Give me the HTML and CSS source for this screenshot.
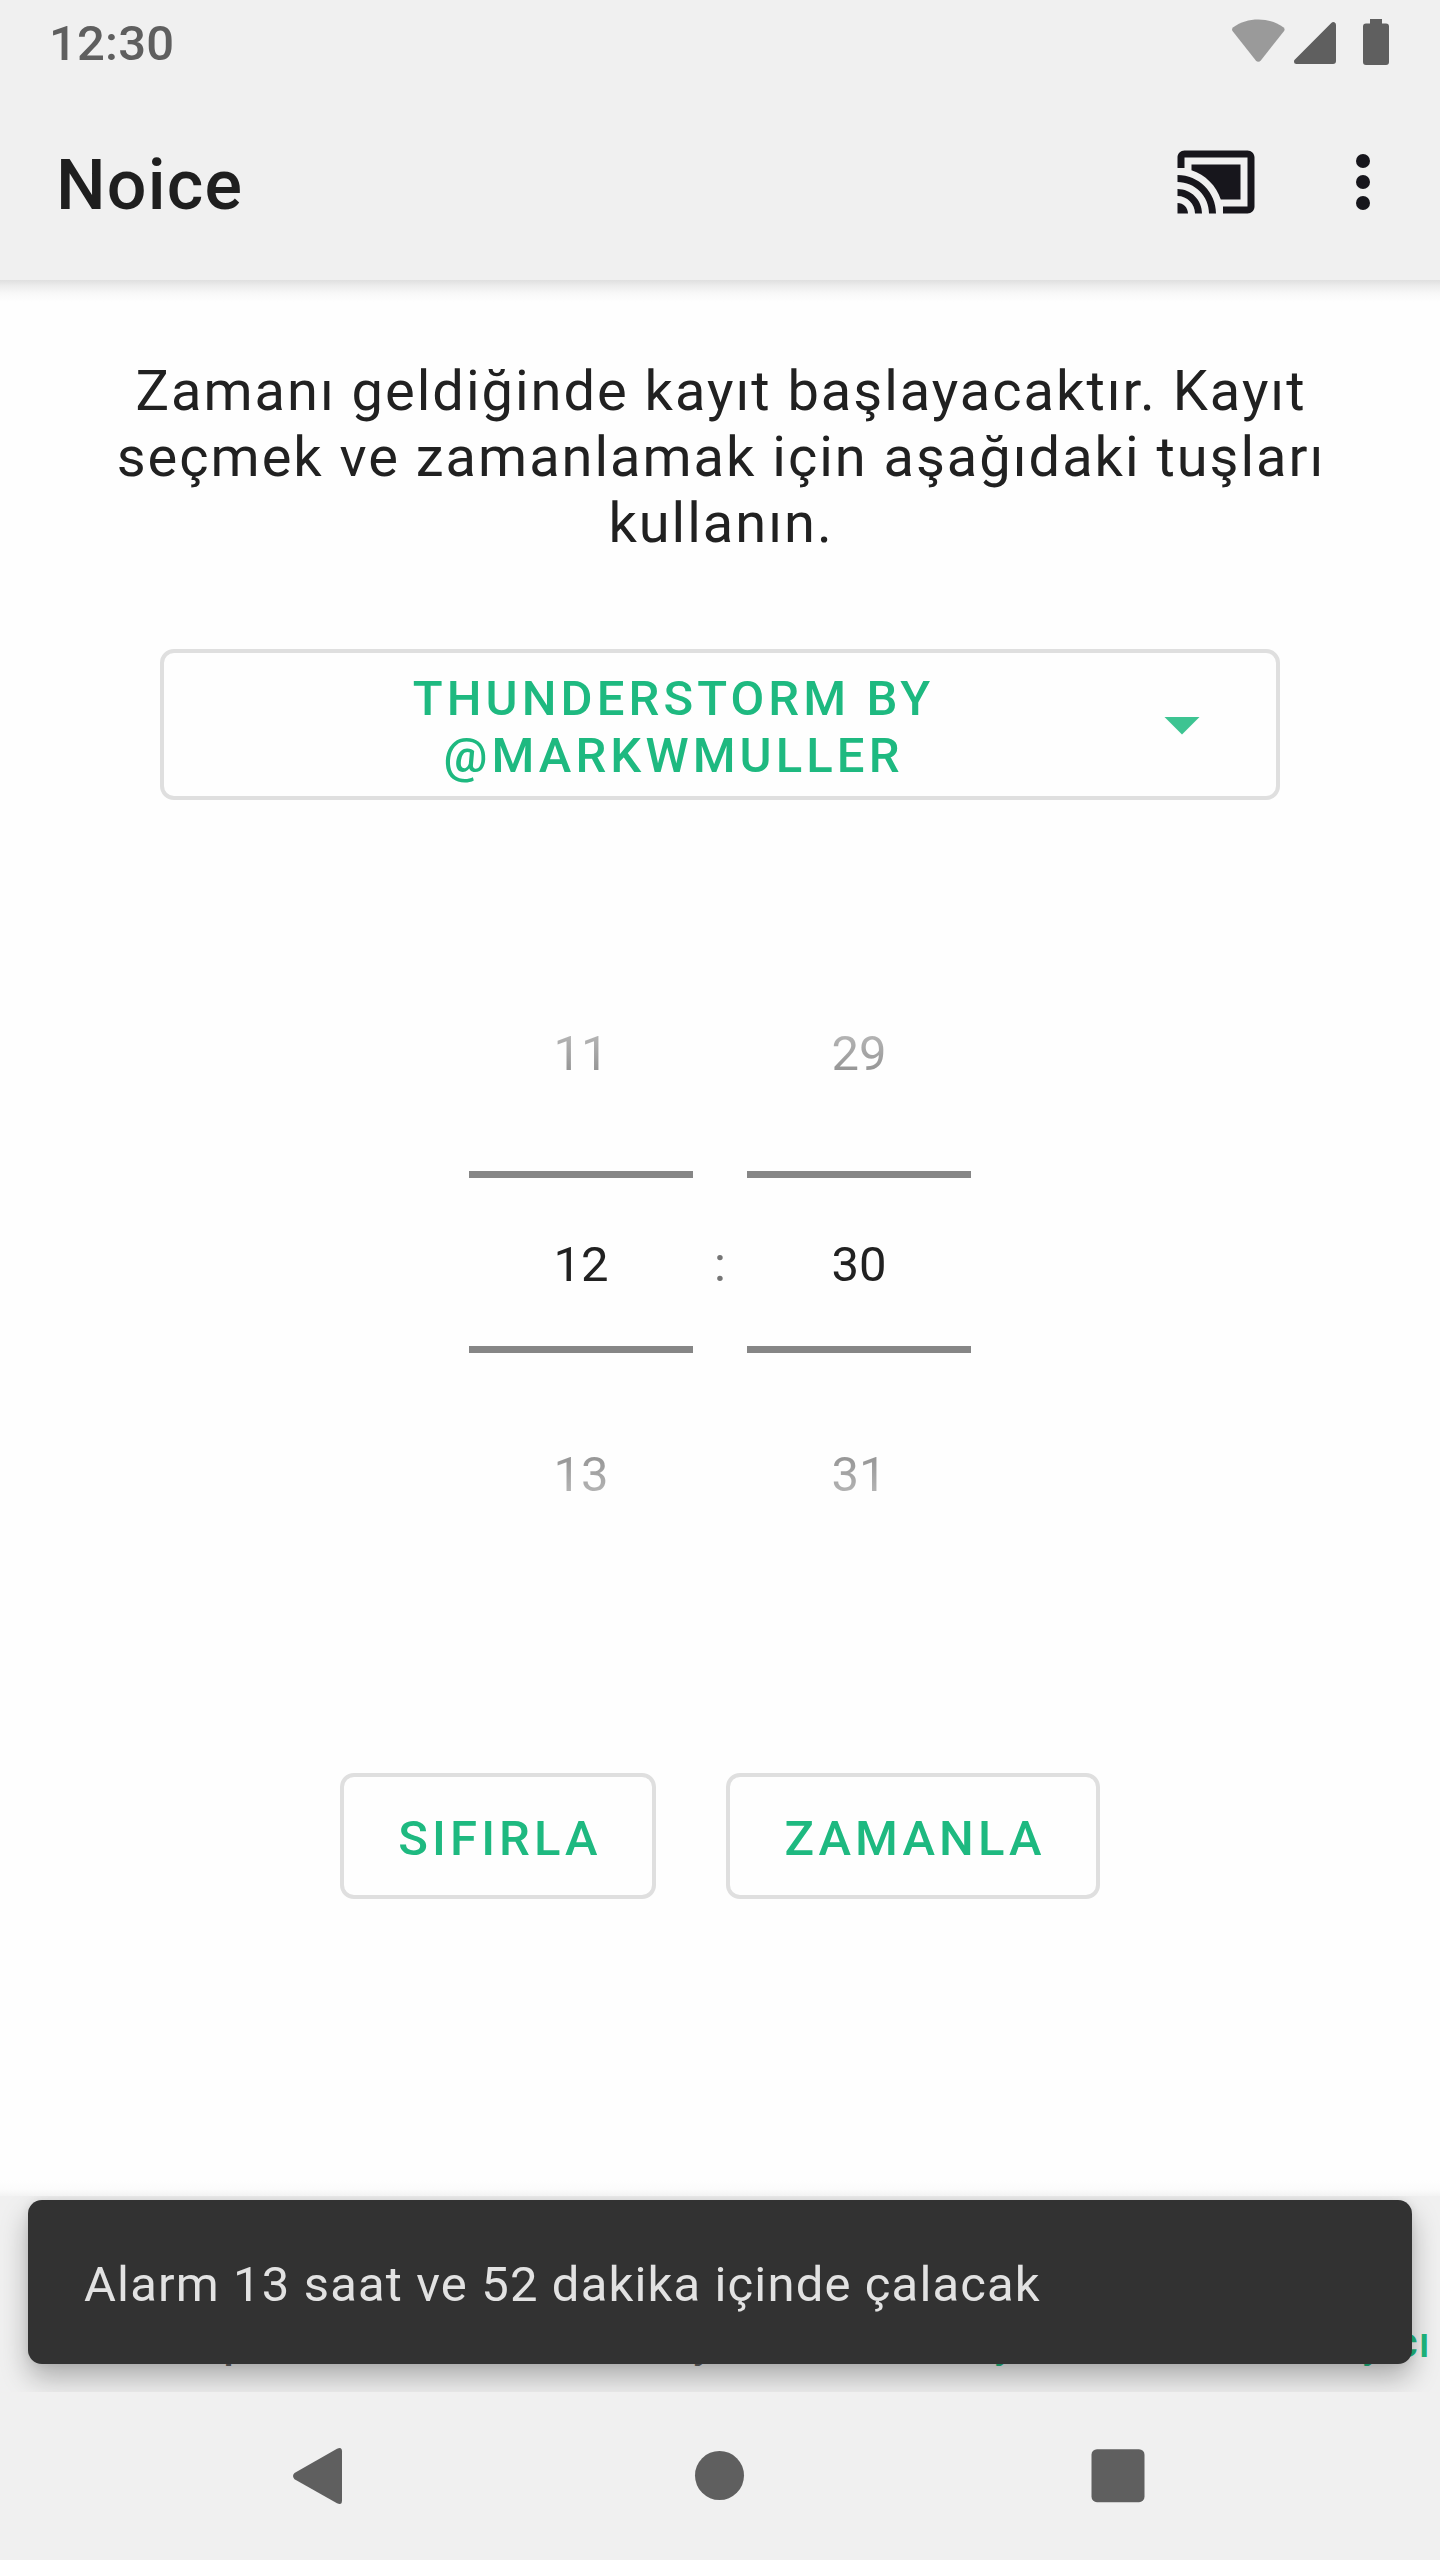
FILE: index.html
```html
<!DOCTYPE html>
<html lang="tr">
<head>
<meta charset="utf-8">
<title>Noice</title>
<link rel="stylesheet" href="styles.css">
</head>
<body>
<div class="screen">
  <header class="top">
    <div class="status-bar">
      <span class="clock">12:30</span>
      <svg class="status-icons" width="160" height="50" viewBox="0 0 160 50">
        <path fill="#9a9a9a" d="M1.700 13.200C.700 11.800 .800 10.300 2.300 9.200C9.500 4 18 1.500 27.300 1.500S45 4 52.300 9.200C53.800 10.300 53.900 11.800 52.900 13.200L29.800 42.500C28.300 44.300 26.300 44.300 24.800 42.500Z"/>
        <path fill="#5f5f5f" d="M63.200 42.300L100.300 5Q102 3.500 103.800 4.500Q105 5 105 7V43Q105 46 102 46H65.500Q63 46 63 44Z"/>
        <path fill="#5f5f5f" d="M139 1h12v4.500h4q3 0 3 3V44q0 3-3 3h-20q-3 0-3-3V8.500q0-3 3-3h4Z"/>
      </svg>
    </div>
    <div class="toolbar">
      <h1 class="title">Noice</h1>
      <svg class="cast" width="84" height="84" viewBox="0 0 24 24"><path fill="#17161c" d="M1 18v3h3c0-1.660-1.340-3-3-3zm0-4v2c2.760 0 5 2.240 5 5h2c0-3.870-3.130-7-7-7zm18-7H5v1.630c3.960 1.280 7.090 4.410 8.370 8.370H19V7zM1 10v2c4.970 0 9 4.030 9 9h2c0-6.080-4.930-11-11-11zm20-7H3c-1.100 0-2 .9-2 2v3h2V5h18v14h-7v2h7c1.100 0 2-.9 2-2V5c0-1.100-.9-2-2-2z"/></svg>
      <svg class="more" width="84" height="84" viewBox="0 0 24 24" fill="#17161c"><circle cx="12" cy="6" r="2"/><circle cx="12" cy="12" r="2"/><circle cx="12" cy="18" r="2"/></svg>
    </div>
  </header>

  <main class="content">
    <p class="hint">Zamanı geldiğinde kayıt başlayacaktır. Kayıt<br>seçmek ve zamanlamak için aşağıdaki tuşları<br>kullanın.</p>

    <button class="outlined preset">
      <span class="preset-name">THUNDERSTORM BY<br>@MARKWMULLER</span>
      <svg width="84" height="84" viewBox="0 0 24 24"><path fill="#3dc492" d="M7 10l5 5 5-5z"/></svg>
    </button>

    <div class="picker">
      <div class="wheel">
        <span class="value before">11</span>
        <span class="value current">12</span>
        <span class="value after">13</span>
      </div>
      <span class="colon">:</span>
      <div class="wheel">
        <span class="value before">29</span>
        <span class="value current">30</span>
        <span class="value after">31</span>
      </div>
    </div>

    <div class="actions">
      <button class="outlined reset">SIFIRLA</button>
      <button class="outlined schedule">ZAMANLA</button>
    </div>
  </main>

  <footer class="tabs">
    <span class="tab library">Kitaplık</span>
    <span class="tab sleep">Uyku</span>
    <span class="tab wake">Uyandırma Zamanlayıcı</span>
    <div class="snackbar">Alarm 13 saat ve 52 dakika içinde çalacak</div>
  </footer>

  <nav class="system-nav">
    <svg width="1440" height="168" viewBox="0 0 1440 168" fill="#5f5f5f">
      <path d="M294.500 81L337 56.700Q342 54.200 342 59.500V108.500Q342 113.800 337 111.300L294.500 87.200Q291.500 84 294.500 81Z"/>
      <circle cx="719.500" cy="83.500" r="24.500"/>
      <rect x="1091.500" y="57.200" width="53" height="53" rx="5.500"/>
    </svg>
  </nav>
</div>
</body>
</html>
```
FILE: styles.css
```css
* { box-sizing: border-box; }

body {
  margin: 0;
  font-family: Roboto, "Liberation Sans", sans-serif;
  background: #fefefe;
  color: #212121;
}

.screen {
  width: 1440px;
  height: 2560px;
  display: flex;
  flex-direction: column;
  overflow: hidden;
  background: #fefefe;
}

.top {
  height: 280px;
  flex: none;
  background: #f0f0f0;
}

.status-bar {
  height: 84px;
  padding: 18px 49px 0 49px;
  display: flex;
  justify-content: space-between;
  align-items: flex-start;
}

.clock {
  font-size: 49px;
  font-weight: 500;
  line-height: 52px;
  letter-spacing: .2px;
  color: #5f5f5f;
}

.toolbar {
  height: 196px;
  padding: 0 35px 0 56px;
  display: flex;
  align-items: center;
}

.title {
  flex: 1;
  margin: 6px 0 0;
  font-size: 70px;
  font-weight: 500;
  line-height: 82px;
  letter-spacing: 1.2px;
  color: #1f1f1f;
}

.cast { margin-right: 63px; }

.content {
  height: 1916px;
  flex: none;
  display: flex;
  flex-direction: column;
  align-items: center;
  background:
    linear-gradient(#dfdfdf, #ececec 25%, #f8f8f8 60%, #fefefe) top / 100% 22px no-repeat,
    linear-gradient(#fefefe, #fbfbfb 60%, #f3f3f3) bottom / 100% 16px no-repeat;
}

.hint {
  margin: 78px 0 0;
  padding-left: 2px;
  font-size: 56px;
  line-height: 66px;
  letter-spacing: 1.98px;
  text-align: center;
  white-space: nowrap;
}

.outlined {
  border: 4px solid #dfdfdf;
  border-radius: 14px;
  background: transparent;
  padding: 4px 0 0 4px;
  font-family: inherit;
  font-size: 49px;
  font-weight: 500;
  line-height: 57px;
  letter-spacing: 4.1px;
  color: #1eb980;
}

.preset {
  width: 1120px;
  height: 151px;
  margin-top: 93px;
  display: flex;
  align-items: center;
  padding: 0 52px;
}

.preset svg { margin-bottom: 1px; }

.preset-name {
  flex: 1;
  padding: 5px 9px 0 0;
  text-align: center;
}

.picker {
  height: 630px;
  margin-top: 147px;
  display: flex;
  align-items: center;
}

.wheel {
  width: 224px;
  height: 630px;
  display: flex;
  flex-direction: column;
  justify-content: center;
  font-size: 49px;
  text-align: center;
}

.before,
.after {
  height: 224px;
  color: transparent;
  background-clip: text;
  -webkit-background-clip: text;
}

.before {
  line-height: 214px;
  background-image: linear-gradient(#d8d8d8, #b3b3b3 40%, #949494 56%, #212121);
}

.current {
  height: 182px;
  line-height: 173px;
  border-top: 7px solid #868686;
  border-bottom: 7px solid #868686;
}

.after {
  line-height: 243px;
  background-image: linear-gradient(#212121, #969696 46%, #b3b3b3 62%, #d8d8d8);
}

.colon {
  width: 54px;
  padding-top: 4px;
  text-align: center;
  font-size: 49px;
  color: #757575;
}

.actions {
  display: flex;
  gap: 70px;
  margin-top: 196px;
}

.reset, .schedule { height: 126px; }
.reset { width: 316px; }
.schedule { width: 374px; }

.tabs {
  position: relative;
  height: 196px;
  flex: none;
  overflow: hidden;
  background: #f0f0f0;
  display: flex;
  align-items: flex-start;
  padding: 122px 9px 0 145px;
  font-size: 42px;
  font-weight: 500;
  line-height: 50px;
  letter-spacing: 1.17px;
  white-space: nowrap;
}

.tab { color: #606060; }
.library { width: 519px; }
.wake { margin-left: auto; color: #1eb980; }

.snackbar {
  position: absolute;
  left: 28px;
  right: 28px;
  top: 4px;
  height: 164px;
  padding: 0 56px;
  border-radius: 14px;
  background: #323232;
  color: #e2e2e2;
  box-shadow: 0 14px 28px rgba(0, 0, 0, .28), 0 0 10px rgba(0, 0, 0, .08);
  font-size: 49px;
  font-weight: 400;
  line-height: 169px;
  letter-spacing: 1.14px;
}

.system-nav {
  height: 168px;
  flex: none;
  background: #f0f0f0;
}

.system-nav svg { display: block; }
```
